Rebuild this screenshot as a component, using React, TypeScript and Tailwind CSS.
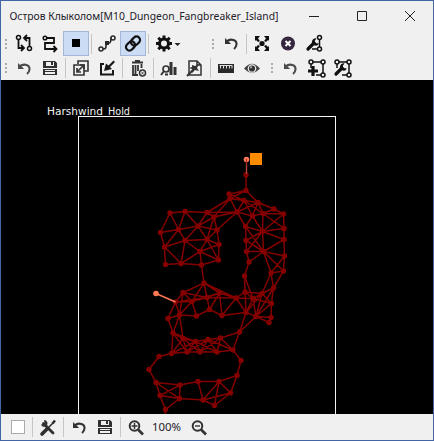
import type { ReactNode } from "react";

function Icon({ children, active = false, color = "#111" }: { children: ReactNode; active?: boolean; color?: string }) {
  return (
    <button className={`block h-[25px] w-[26px] shrink-0 ${active ? "bg-[#cddcf5] outline outline-1 -outline-offset-1 outline-[#a3b7d8]" : ""}`}>
      <svg width="26" height="25" viewBox="0 0 26 25" fill="none" stroke={color} strokeWidth="2" style={{ color }}>
        {children}
      </svg>
    </button>
  );
}
const Sep = () => <span className="mx-[2px] h-5 w-px shrink-0 bg-[#c5c5c5]" />;
const Grip = () => (
  <span className="flex h-5 w-[10px] shrink-0 flex-col items-center justify-center gap-[2px]">
    {[0, 1, 2].map((i) => <i key={i} className="h-[2px] w-[2px] bg-[#aaa]" />)}
  </span>
);
const Undo = ({ soft = false }: { soft?: boolean }) => (
  <Icon color={soft ? "#4b4b4b" : "#333"}>
    <path d="M8.5 10.5C13 7 19 9 18.5 13.5Q18.3 16 16 18" strokeWidth="2.1" />
    <path d="M7 7v6h6.2Z" fill="currentColor" stroke="none" />
  </Icon>
);
const Save = () => (
  <Icon color="#303030">
    <path fillRule="evenodd" d="M6 5h12l2 2v5H6ZM9 6v4h8V6ZM14 6h2v3h-2ZM6 13h14v6H6ZM8 14v1h10v-1ZM8 16v2h10v-2Z" fill="currentColor" stroke="none" />
  </Icon>
);
const Wrench = () => (
  <g>
    <path d="m7 18 6-6" strokeWidth="3.2" strokeLinecap="round" />
    <path d="M15.5 7.5a3.6 3.6 0 1 0 2.3 5l-3.2-.6-1-2Z" fill="currentColor" stroke="none" />
  </g>
);
const Frame = ({ children }: { children: ReactNode }) => (
  <Icon>
    <path d="M8 8v4m2-6h8m2 2v9m-2 2h-5" strokeWidth="1.5" />
    <g fill="#f0f0f0" strokeWidth="1.5"><circle cx="8" cy="6" r="2" /><circle cx="20" cy="6" r="2" /><circle cx="20" cy="19" r="2" /></g>
    {children}
  </Icon>
);
const Zoom = ({ plus = false }: { plus?: boolean }) => (
  <Icon color="#333">
    <circle cx="11.5" cy="11" r="4.8" />
    <path d="m15 14.5 5 5" strokeWidth="2.7" />
    <path d={plus ? "M8.5 11h6M11.5 8v6" : "M9 11h5"} strokeWidth="1.4" />
  </Icon>
);

const points: Record<string, [number, number]> = {
  n1: [246, 175], n2: [246, 190.5], n3: [229, 194], n3b: [230, 198.5], n4: [244, 200.5], n5: [258, 202.5], n6: [274, 209], n7: [283.5, 214], n8: [237, 212], n9: [252.5, 216], n10: [263, 213.5],
  A: [170, 213], B: [185, 211.5], C: [207, 212.5], D: [214, 217], E: [160.5, 232.5], F: [178.5, 229.5], G: [198, 226], H: [217, 230], I: [164.5, 247], J: [185, 240.5], K: [207, 239.5], L: [219, 244.5], M: [200, 251.5], N: [165.5, 264.5], O: [181, 263.5], P: [201.5, 265], Q: [218.5, 260],
  R: [245.5, 226.5], S: [262.5, 231.5], T: [284, 228.5], U: [246, 240.5], V: [284, 239.5], W: [246.5, 251.5], X: [263.5, 251.5], Y: [249, 262], Z: [284.5, 256], a: [244.5, 276], b: [271, 273], c: [283.5, 271],
  d: [204, 283], e: [183, 292.5], f: [175.5, 302], g: [192, 301.5], h: [207, 297.5], i: [219.5, 293], j: [209.5, 309.5], k: [168, 318.5], l: [179.5, 315], m: [196.5, 316], n: [173, 333], o: [183, 338.5], p: [195.5, 341.5], q: [208, 339.5],
  r: [222, 315.5], s: [236, 298], t: [245, 292], u: [253, 298.5], v: [262, 293.5], w: [273.5, 288], x: [271.5, 303.5], y: [246, 312.5], z: [256, 316.5], aa: [271, 317.5], bb: [269, 322.5], cc: [239.5, 332], q2: [220.5, 338],
  dd: [159, 356.5], ee: [171.5, 353.5], ff: [187, 352], gg: [200, 352], hh: [217, 352], ii: [233, 350], jj: [241, 360.5], kk: [149, 369.5], ll: [237, 375.5], mm: [156, 382.5], nn: [180, 385], oo: [198, 381.5], pp: [219, 381.5], qq: [160, 395.5], rr: [179.5, 398.5], ss: [203, 400], tt: [214.5, 405.5], uu: [230.5, 393], vv: [165.5, 409.5], end: [165, 418],
};
const chains = [
  "n1 n2 n5 n6 n7 T V Z c w x aa bb z x",
  "n2 n3 n3b n4 n5 n9 n10 n6",
  "n2 n3b n8 n4 n9", "n4 n3", "n5 n8 n9 R", "n5 n10 n7", "n4 n10", "n3b D", "n3b C",
  "n8 R U W Y a t", "n8 C B A E I N O P Q L H D C", "n8 D K", "n8 H",
  "A F B G C", "E F G H", "F I J F", "G J O M P", "G K J", "D G", "K H", "K L M K Q M J", "I O", "P d",
  "n10 S n9", "R S T n10", "S n7", "R X", "S U", "S X", "S V", "S W",
  "U X V X W", "X Y", "X Z b c", "X b v", "X c",
  "b w v u s i d e f k n ee dd kk mm qq vv end",
  "e g f l k", "e l g h f", "d g m l n", "d h e", "g i h j m g", "d i r j", "d s r y s", "h s t v", "t u y t", "a y", "a u",
  "s y z cc y", "u z v x u", "y v", "z aa x z w", "i j", "w v",
  "n o p q q2 cc", "l o", "n ff p gg q hh q2 ii cc",
  "ee ff gg hh ii jj ll pp oo nn mm rr nn qq rr ss uu ll", "ee o ff q", "o gg q2", "n p hh", "ee n", "ee p", "q ii", "p ff",
  "qq vv rr", "oo ss pp tt ss", "pp uu tt",
];
const path = chains.map((s) => s.split(" ").map((key, i) => `${i ? "L" : "M"}${points[key][0]} ${points[key][1]}`).join(" ")).join(" ");

function Map() {
  return (
    <svg className="block" width="432" height="334" viewBox="1 80 432 334">
      <rect x="78.5" y="116.5" width="257" height="320" fill="none" stroke="#f4f4f4" />
      <g fill="#f4f4f4" fontSize="10.5" fontFamily="'DejaVu Sans', sans-serif">
        <text x="47" y="115" textLength="56" lengthAdjust="spacingAndGlyphs">Harshwind</text>
        <text x="108" y="115" textLength="22" lengthAdjust="spacingAndGlyphs">Hold</text>
      </g>
      <g stroke="#840000" fill="#840000"><path d={path} fill="none" strokeWidth="1.5" />
        {Object.values(points).map(([x, y]) => <circle key={`${x}-${y}`} cx={x} cy={y} r="2.7" stroke="none" />)}
      </g>
      <path d="M246.5 160v14" stroke="#b84435" strokeWidth="1.4" />
      <circle cx="246.5" cy="159.5" r="2.8" fill="#ff7957" /><path d="M246.5 159v6" stroke="#a22" />
      <path d="M156 293.5 175.5 302" stroke="#ff7954" strokeWidth="1.5" /><circle cx="156" cy="293.5" r="2.8" fill="#ff7954" />
      <path d="M250 153h12v12h-12Z" fill="#ff8c00" />
    </svg>
  );
}

export default function App() {
  return (
    <main className="flex h-[441px] w-[434px] flex-col overflow-hidden border border-[#4166a3] bg-[#f0f0f0] text-[#222] [font-family:'Noto_Sans',sans-serif]">
      <header className="flex h-[30px] shrink-0 items-center">
        <svg width="432" height="30" viewBox="1 1 432 30" fill="none" stroke="#222">
          <text x="9.5" y="20" fill="#24202a" stroke="none" fontSize="11.3" textLength="269" lengthAdjust="spacingAndGlyphs">Остров Клыколом[M10_Dungeon_Fangbreaker_Island]</text>
          <path d="M309 16.5h10M357.5 11.5h9v9h-9ZM405 11l10 10M415 11l-10 10" />
        </svg>
      </header>
      <nav className="flex h-[25px] shrink-0 items-center">
        <Grip />
        <Icon><path d="M7.5 8v9h5M10 14l3 3-3 3M18.5 16V7h-5M16 4l-3 3 3 3" strokeWidth="1.8" /><g fill="#f0f0f0" strokeWidth="1.5"><circle cx="7.5" cy="6.5" r="2" /><circle cx="18.5" cy="17.5" r="2" /></g></Icon>
        <Icon><path d="M9 7h8v5H8v6h11M16.5 15l3 3-3 3" strokeWidth="1.8" /><circle cx="8" cy="7" r="1.8" fill="#f0f0f0" strokeWidth="1.5" /></Icon>
        <Icon active><path d="M9 8h8v8H9Z" fill="#000" stroke="none" /></Icon><Sep />
        <Icon color="#292929"><path d="M8 18h2q2 0 2-3t2-3h1q2 0 2-5h2" strokeWidth="1.6" /><g fill="#f0f0f0" strokeWidth="1.5"><circle cx="7" cy="18" r="2" /><circle cx="19" cy="7" r="2" /></g><path d="M11 10h4v4h-4Z" fill="#292929" stroke="none" /></Icon>
        <Icon active><g transform="rotate(-45 13 12.5)" strokeWidth="2.2"><rect x="4.5" y="9" width="10" height="7" rx="3.5" /><rect x="11.5" y="9" width="10" height="7" rx="3.5" /></g></Icon><Sep />
        <Icon><circle cx="13" cy="12.5" r="4.5" strokeWidth="3" /><path d="M13 4.5v3m0 10v3M5 12.5h3m10 0h3M7.3 6.8l2 2m7.4 7.4 2 2m0-11.4-2 2m-7.4 7.4-2 2" strokeWidth="3" /></Icon>
        <svg className="overflow-visible" width="31" height="24" fill="#222"><path d="M-2.5 11h6L.5 14Z" /></svg>
        <Grip /><Undo /><Sep />
        <Icon><path d="M6 5h5L9 7.5l2 2.5-2 1-2-2-1 1ZM20 5v5l-1-1-2 2-2-1 2-2.5L15 5ZM6 20v-5l1 1 2-2 2 1-2 2.5 2 2.5ZM20 20h-5l2-2.5-2-2.5 2-1 2 2 1-1Z" fill="#111" stroke="none" /><circle cx="13" cy="12.5" r="2.6" fill="#111" stroke="none" /></Icon>
        <Icon><circle cx="13" cy="12.5" r="7" fill="#35273f" stroke="none" /><path d="m10.5 10 5 5m0-5-5 5" stroke="#fff" strokeWidth="1.9" /></Icon>
        <Icon><path d="M18.5 8v8M16 18h-5" strokeWidth="1.5" /><g fill="#f0f0f0" strokeWidth="1.5"><circle cx="18.5" cy="6.5" r="2" /><circle cx="18.5" cy="18" r="2" /></g><Wrench /></Icon>
      </nav>
      <nav className="flex h-[24px] shrink-0 items-center">
        <Grip /><Undo soft /><Save /><Sep />
        <Icon color="#333"><path d="M10 8V5h10v10h-4M6 9h10v10H6Z" strokeWidth="1.6" /><path d="m9 16 7-7m-4 0h4v4M9 12v4h4" strokeWidth="1.7" /></Icon>
        <Icon color="#181818"><path d="M10 8H7v10.5h12V14" /><path d="m21 6-1.5-1.5-5 5L12 7.5l-2 7.5 8-2-2-2Z" fill="currentColor" stroke="none" /></Icon><Sep />
        <Icon color="#333"><path d="M7 6.5h11M10 5h5M8 9v10h5M10.5 9v9M13 9v6M16.5 8v4" strokeWidth="1.8" /><circle cx="17.5" cy="17" r="3" fill="#f0f0f0" strokeWidth="1.5" /><path d="m16.4 16 2.2 2.2m0-2.2-2.2 2.2" strokeWidth="1" /></Icon><Sep />
        <Icon color="#333"><circle cx="10" cy="13" r="3" strokeWidth="1.7" /><path d="m8 15-3 4M9 18.5h3" strokeWidth="2" /><path d="M15 6v13M19 11v8" strokeWidth="3" /></Icon>
        <Icon color="#333"><path d="M7 19V5h8l4 4v10H7M15 5v4h4" strokeWidth="1.5" /><path d="m5 20 6-6" /><path d="m10 9 3 1 4-2-2 4 2 3-4-1-3 3v-4l-3-1 3-1Z" fill="currentColor" stroke="none" /></Icon><Sep />
        <Icon color="#292929"><path d="M5 8h16v9H5Z" fill="currentColor" stroke="none" /><path d="M6.5 9.5h13M7.5 10v2.5m3-2.5v2.5m3-2.5v2.5m3-2.5v2.5m2.5-2.5v2.5" stroke="#ddd" strokeWidth="1" /></Icon>
        <Icon color="#444"><path d="M5 12.5Q13 3 21 12.5 13 21 5 12.5Z" fill="currentColor" stroke="none" /><circle cx="13" cy="12.5" r="3.7" fill="#333" stroke="#eee" strokeWidth="1.2" /><circle cx="12" cy="11.3" r="1" fill="#bbb" stroke="none" /></Icon>
        <span className="w-[2px]" /><Grip /><Undo soft />
        <Frame><path d="M10 10v10M5 15h10" strokeWidth="3.2" /></Frame>
        <Frame><Wrench /></Frame>
      </nav>
      <section className="h-[334px] shrink-0 bg-black"><Map /></section>
      <footer className="flex h-[26px] shrink-0 items-center">
        <span className="ml-[10px] mr-1 h-[14px] w-[14px] border border-[#aaa] bg-white" />
        <span className="w-px" /><Sep />
        <Icon color="#303030">
          <path d="m8.5 8.5 9.5 9.5" strokeWidth="2.8" strokeLinecap="round" />
          <path d="M6 9.5A3.5 3.5 0 0 0 11.5 11 3.5 3.5 0 0 0 9 5L9.5 8 8.5 9Z" fill="currentColor" stroke="none" />
          <path d="m12.5 13.5 6-6" strokeWidth="1.6" /><path d="m17.5 8.5 2.5-3" strokeWidth="2.5" />
          <path d="m7 19 5-5" strokeWidth="3.6" strokeLinecap="round" />
        </Icon>
        <Sep /><Undo /><Save /><Sep /><Zoom plus />
        <svg width="37" height="24"><text x="3" y="16" fill="#24202a" fontSize="11.5" textLength="29" lengthAdjust="spacingAndGlyphs">100%</text></svg>
        <Zoom />
      </footer>
    </main>
  );
}
